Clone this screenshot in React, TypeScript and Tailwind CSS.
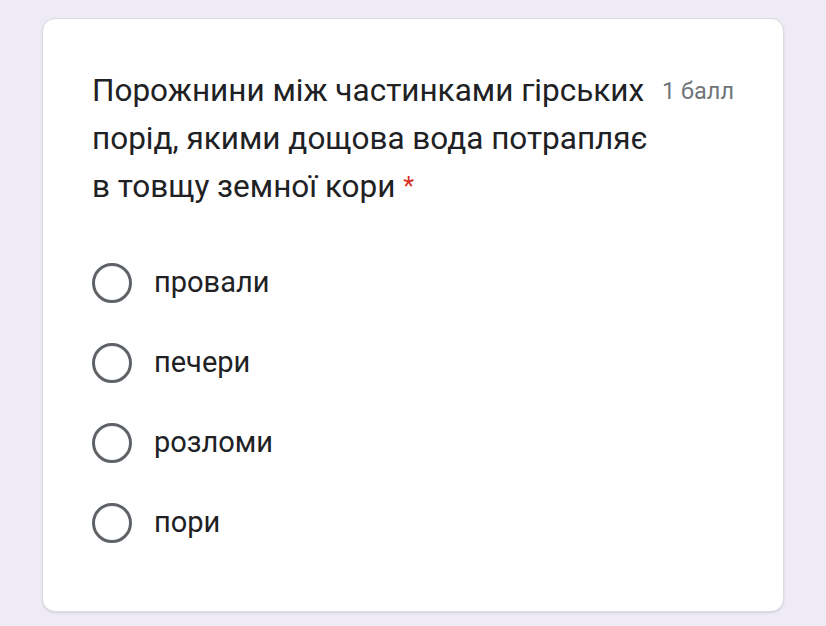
import React from "react";

const options = ["провали", "печери", "розломи", "пори"];

export default function App() {
  return (
    <div
      className="w-[826px] h-[626px] bg-[#efebf6] pt-[18px] pl-[42px]"
      style={{ fontFamily: "Roboto, 'Noto Sans', sans-serif" }}
    >
      <div className="w-[742px] h-[594px] bg-white rounded-[13px] border border-[#dadce0] shadow-[0_1px_2px_rgba(60,64,67,0.15)] pl-[49px] pr-[49px] pt-[48px]">
        <div className="flex items-start justify-between">
          <div className="w-[568px] h-[144px] text-[31.5px] leading-[48px] text-[#202124]">
            Порожнини між частинками гірських порід, якими дощова вода потрапляє в товщу земної кори{" "}
            <span className="text-[#d93025] text-[25px] leading-none relative top-[-2px]">*</span>
          </div>
          <div className="text-[23.5px] leading-[48px] text-[#70757a] whitespace-nowrap">
            1 балл
          </div>
        </div>
        <div className="mt-[52px] flex flex-col gap-[40px]">
          {options.map((o) => (
            <div key={o} className="flex items-center h-[40px]">
              <div className="w-[40px] h-[40px] rounded-full border-[3.5px] border-[#5f6368]" />
              <div className="ml-[22px] text-[29px] text-[#202124]">{o}</div>
            </div>
          ))}
        </div>
      </div>
    </div>
  );
}
